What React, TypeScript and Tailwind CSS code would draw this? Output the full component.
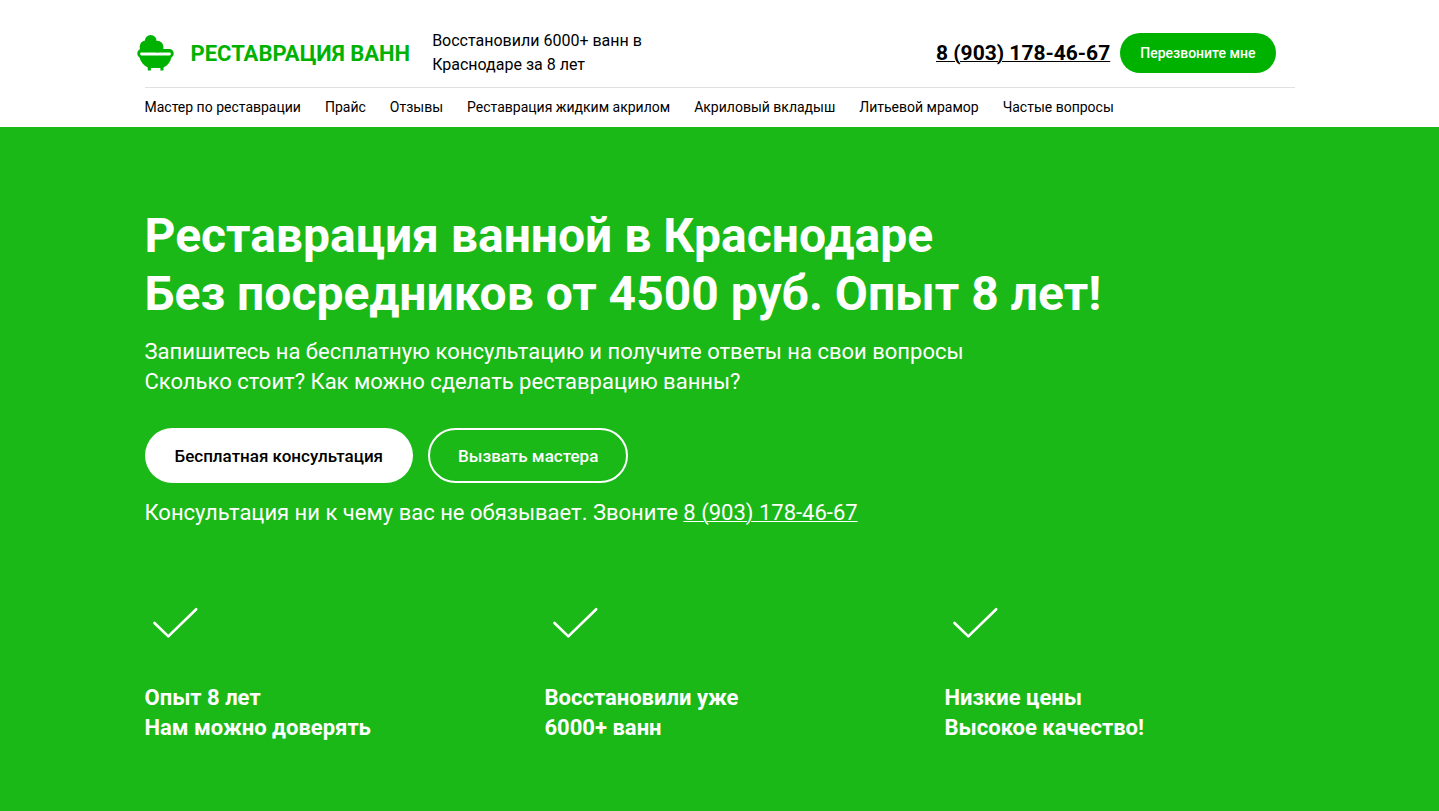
import React from 'react';

const PHONE = '8 (903) 178-46-67';
const PHONE_HREF = 'tel:+79031784667';

const menu = [
    { title: 'Мастер по реставрации', href: '#master' },
    { title: 'Прайс', href: '#price' },
    { title: 'Отзывы', href: '#reviews' },
    { title: 'Реставрация жидким акрилом', href: '#acryl' },
    { title: 'Акриловый вкладыш', href: '#insert' },
    { title: 'Литьевой мрамор', href: '#marble' },
    { title: 'Частые вопросы', href: '#faq' },
];

const features = [
    ['Опыт 8 лет', 'Нам можно доверять'],
    ['Восстановили уже', '6000+ ванн'],
    ['Низкие цены', 'Высокое качество!'],
];

const BathIcon = () => (
    <svg width="37" height="37" viewBox="0 0 37 37" fill="#00b200" className="shrink-0" aria-hidden="true">
        <circle cx="13.7" cy="6" r="5.9" />
        <circle cx="8.6" cy="11.4" r="5.8" />
        <circle cx="20.4" cy="11.7" r="5.9" />
        <rect x="2.8" y="11.4" width="23.5" height="5" />
        <path
            fillRule="evenodd"
            d="M4.5 14H32.2a4.5 4.5 0 0 1 2.2 8.4C33.3 27 30.6 30.4 26.5 32.6V35.5H23.4V32.9H13.9V35.5H10.8V32.6C6.7 30.4 3.7 27 2.6 22.4A4.5 4.5 0 0 1 4.5 14ZM4.5 17.6a1.4 1.4 0 0 0 0 2.8H32.5a1.4 1.4 0 0 0 0-2.8Z"
        />
    </svg>
);

const CheckIcon = () => (
    <svg width="60" height="60" viewBox="0 0 60 60" fill="none" stroke="#fff" strokeWidth="2.6" strokeLinecap="round" strokeLinejoin="round" aria-hidden="true">
        <path d="M9.5 30L23.3 43.4L51.2 16.2" />
    </svg>
);

const Header = () => {
    return (
        <header className="bg-white text-black">
            <div className="max-w-[1150px] mx-auto">
                <div className="flex items-center justify-between pt-[29px] pb-[10px] pr-[19px] border-b border-[#e0e0e0]">
                    <div className="flex items-center">
                        <a href="#top" className="-ml-2 flex items-center gap-[17px] text-[22px] font-bold text-[#00b200] whitespace-nowrap">
                            <BathIcon />
                            РЕСТАВРАЦИЯ ВАНН
                        </a>
                        <p className="ml-[22px] w-[230px] text-base">
                            Восстановили 6000+ ванн в Краснодаре за 8 лет
                        </p>
                    </div>

                    <div className="flex items-center gap-[10px]">
                        <a href={PHONE_HREF} className="text-[21px] leading-[30px] font-bold underline decoration-1 whitespace-nowrap">{PHONE}</a>
                        <button className="h-10 px-5 rounded-full bg-[#00b200] text-white text-sm font-medium cursor-pointer">
                            Перезвоните мне
                        </button>
                    </div>
                </div>

                <nav className="flex flex-wrap gap-x-6 pt-[9px] pb-[10px] text-sm">
                    {menu.map((item) => (
                        <a key={item.href} href={item.href}>{item.title}</a>
                    ))}
                </nav>
            </div>
        </header>
    );
};

const Hero = () => {
    return (
        <main className="grow bg-[#1ab918] text-white">
            <div className="max-w-[1150px] mx-auto pt-20 pb-16 text-[22px] leading-[30px]">
                <h1 className="text-5xl leading-[58px] font-bold">
                    Реставрация ванной в Краснодаре<br />
                    Без посредников от 4500 руб. Опыт 8 лет!
                </h1>
                <p className="mt-[14px]">
                    Запишитесь на бесплатную консультацию и получите ответы на свои вопросы<br />
                    Сколько стоит? Как можно сделать реставрацию ванны?
                </p>

                <div className="mt-[31px] flex flex-wrap gap-[15px] text-[17px] font-medium">
                    <button className="h-[55px] px-[30px] rounded-full bg-white text-black cursor-pointer">
                        Бесплатная консультация
                    </button>
                    <button className="h-[55px] px-7 rounded-full border-2 border-white cursor-pointer">
                        Вызвать мастера
                    </button>
                </div>
                <p className="mt-[15px]">
                    Консультация ни к чему вас не обязывает. Звоните <a href={PHONE_HREF} className="underline decoration-1">{PHONE}</a>
                </p>

                <ul className="mt-[65px] grid grid-cols-3 gap-[50px] font-bold">
                    {features.map(([first, second]) => (
                        <li key={first}>
                            <CheckIcon />
                            <p className="mt-[30px]">{first}<br />{second}</p>
                        </li>
                    ))}
                </ul>
            </div>
        </main>
    );
};

const App = () => {
    return (
        <div id="top" className="min-h-screen flex flex-col font-[Roboto,sans-serif]">
            <Header />
            <Hero />
        </div>
    );
};

export default App;
